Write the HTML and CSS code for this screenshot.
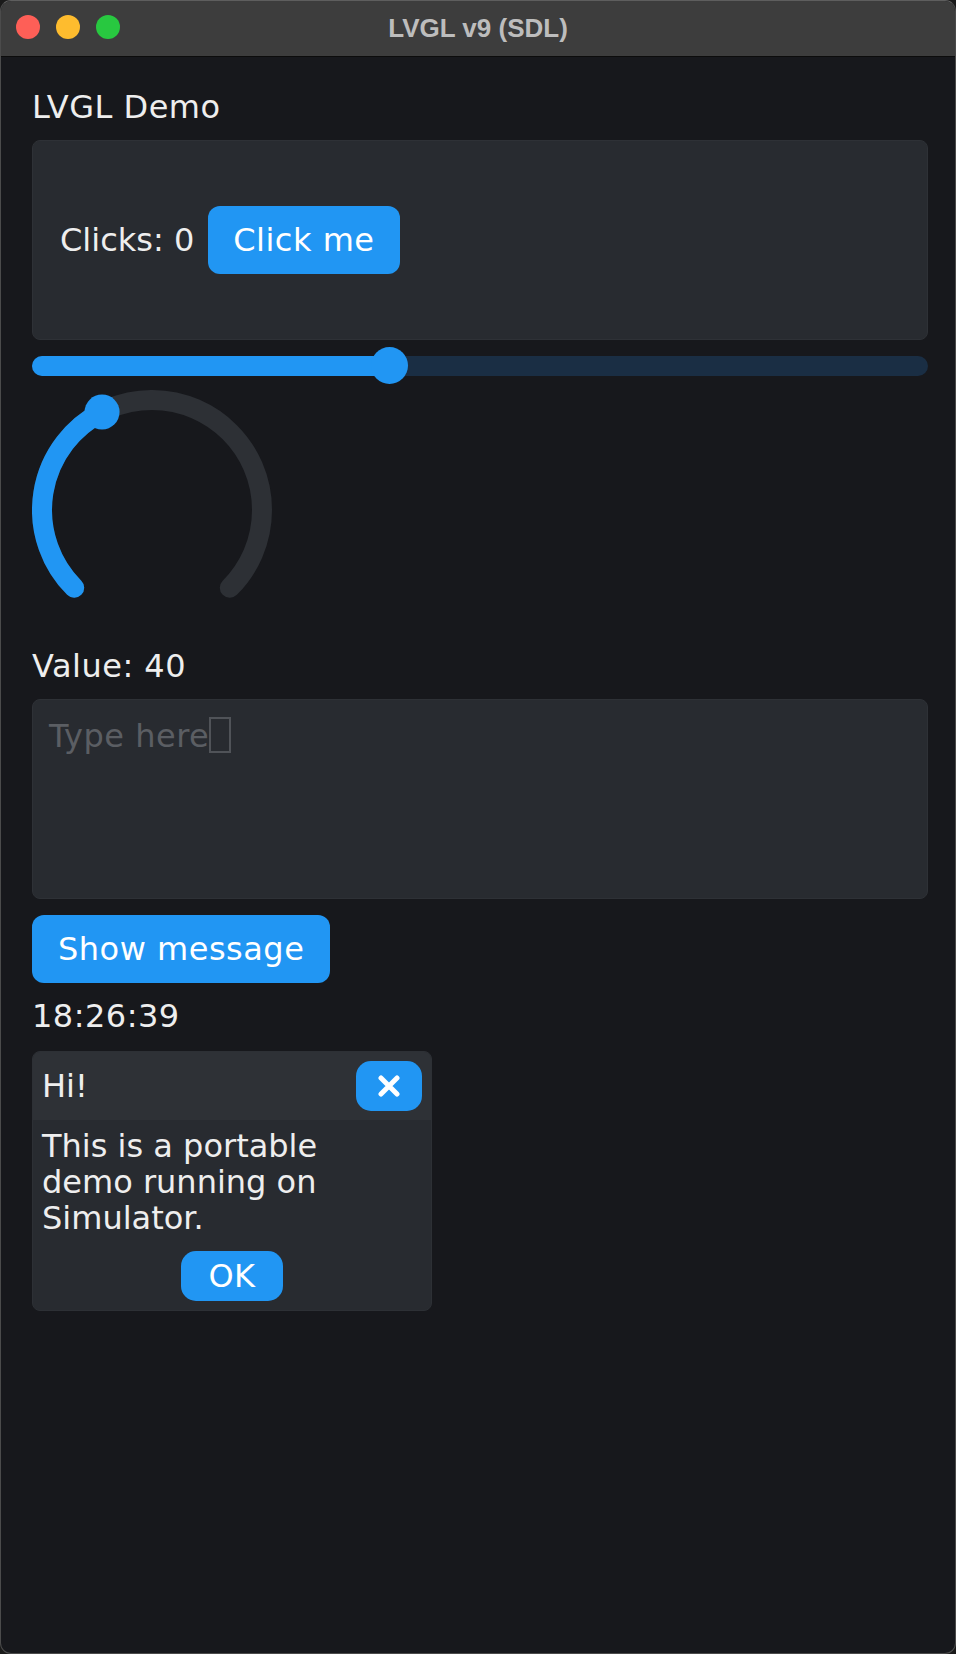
FILE: index.html
```html
<!DOCTYPE html>
<html lang="en">
<head>
<meta charset="utf-8">
<title>LVGL v9 (SDL)</title>
<link rel="stylesheet" href="styles.css">
</head>
<body>
<div class="window">
  <header class="titlebar">
    <div class="lights">
      <span class="light red"></span>
      <span class="light yellow"></span>
      <span class="light green"></span>
    </div>
    <div class="title">LVGL v9 (SDL)</div>
  </header>
  <main class="screen">
    <div class="lbl">LVGL Demo</div>
    <div class="card">
      <span class="lbl clicks">Clicks: 0</span>
      <button class="btn">Click me</button>
    </div>
    <div class="slider">
      <div class="slider-fill" style="width:40%"><span class="slider-knob"></span></div>
    </div>
    <svg class="arc" width="240" height="244" viewBox="0 0 240 244">
      <path d="M 42.22 197.78 A 110 110 0 1 1 197.78 197.78" fill="none" stroke="#2d3035" stroke-width="20" stroke-linecap="round"/>
      <path d="M 42.22 197.78 A 110 110 0 0 1 70.06 22" fill="none" stroke="#2196f3" stroke-width="20" stroke-linecap="round"/>
      <circle cx="70.06" cy="22" r="17.5" fill="#2196f3"/>
    </svg>
    <div class="lbl">Value: 40</div>
    <div class="textarea"><span class="placeholder">Type here</span><span class="cursor"></span></div>
    <button class="btn">Show message</button>
    <div class="lbl time">18:26:39</div>
    <div class="msgbox">
      <div class="msg-header">
        <span class="msg-title">Hi!</span>
        <button class="btn close-btn" aria-label="Close">
          <svg width="22" height="22" viewBox="0 0 22 22"><path d="M3 3 L19 19 M19 3 L3 19" stroke="#ffffff" stroke-width="5" stroke-linecap="round"/></svg>
        </button>
      </div>
      <div class="msg-body">
        <p class="msg-text">This is a portable<br>demo running on<br>Simulator.</p>
        <div class="msg-footer"><button class="btn ok-btn">OK</button></div>
      </div>
    </div>
  </main>
</div>
</body>
</html>
```

FILE: styles.css
```css
html, body {
  margin: 0;
  padding: 0;
  background: #1a1a1a;
}
body {
  width: 956px;
  height: 1654px;
  font-family: "DejaVu Sans", "Liberation Sans", sans-serif;
}
.window {
  box-sizing: border-box;
  width: 956px;
  height: 1654px;
  border: 1px solid #4b4b4b;
  border-top-color: #5e5e5e;
  border-radius: 11px;
  overflow: hidden;
  background: #17181c;
  display: flex;
  flex-direction: column;
}
.titlebar {
  height: 55px;
  flex: none;
  background: #3d3d3d;
  border-bottom: 1px solid #0c0c0c;
  position: relative;
  display: flex;
  align-items: center;
  justify-content: center;
}
.lights {
  position: absolute;
  left: 15px;
  top: 14px;
  display: flex;
  gap: 16px;
}
.light {
  width: 24px;
  height: 24px;
  border-radius: 50%;
}
.red { background: #fe5f57; }
.yellow { background: #febc2e; }
.green { background: #28c840; }
.title {
  font-family: "Liberation Sans", Arial, sans-serif;
  font-weight: bold;
  font-size: 26px;
  color: #bdbdbd;
  margin-top: -1px;
}
.screen {
  flex: 1;
  padding: 33px 27px 0 31px;
  display: flex;
  flex-direction: column;
  align-items: flex-start;
  gap: 16px;
}
.lbl {
  font-size: 32px;
  line-height: 34px;
  color: #eeeeee;
  letter-spacing: 0.5px;
}
.clicks {
  letter-spacing: 0;
}
.time {
  line-height: 36px;
  margin-top: -1px;
}
.card {
  box-sizing: border-box;
  width: 896px;
  height: 200px;
  background: #282b30;
  border: 1px solid #2e3136;
  border-radius: 8px;
  padding: 0 27px;
  display: flex;
  align-items: center;
  gap: 14px;
}
.btn {
  font-family: "DejaVu Sans", "Liberation Sans", sans-serif;
  font-size: 32px;
  line-height: 34px;
  letter-spacing: 0.5px;
  color: #ffffff;
  background: #2196f3;
  border: none;
  border-radius: 12px;
  height: 68px;
  padding: 0 26px;
  margin: 0;
  display: flex;
  align-items: center;
  justify-content: center;
}
.card .btn {
  padding: 0 25px;
}
.slider {
  width: 896px;
  height: 20px;
  border-radius: 10px;
  background: #1a2e44;
  flex: none;
}
.slider-fill {
  position: relative;
  height: 20px;
  border-radius: 10px;
  background: #2196f3;
}
.slider-knob {
  position: absolute;
  right: -18px;
  top: -9px;
  width: 37px;
  height: 37px;
  border-radius: 50%;
  background: #2196f3;
}
.arc {
  display: block;
  flex: none;
  margin-top: -2px;
  margin-bottom: -1px;
}
.textarea {
  box-sizing: border-box;
  width: 896px;
  height: 200px;
  background: #282b30;
  border: 1px solid #2e3136;
  border-radius: 8px;
  padding: 19px 16px;
  font-size: 32px;
  line-height: 34px;
  display: flex;
  align-items: flex-start;
}
.placeholder {
  color: #5b5e63;
  letter-spacing: 0.5px;
}
.cursor {
  box-sizing: border-box;
  width: 22px;
  height: 36px;
  margin-top: -2px;
  border: 2px solid #505358;
}
.msgbox {
  width: 400px;
  margin-top: 1px;
  border-radius: 8px;
  overflow: hidden;
  background: #282b30;
  border: 1px solid #2d3035;
  box-sizing: border-box;
}
.msg-header {
  height: 68px;
  background: #2e3136;
  display: flex;
  align-items: center;
  justify-content: space-between;
  padding: 0 9px 0 9px;
}
.msg-title {
  font-size: 32px;
  line-height: 34px;
  color: #eeeeee;
}
.close-btn {
  width: 66px;
  height: 50px;
  padding: 0;
  border-radius: 15px;
}
.close-btn svg {
  display: block;
}
.msg-body {
  padding: 8px 9px 9px 9px;
}
.msg-text {
  margin: 0;
  font-size: 32px;
  line-height: 36px;
  color: #eeeeee;
}
.msg-footer {
  display: flex;
  justify-content: center;
  margin-top: 15px;
}
.ok-btn {
  width: 102px;
  height: 50px;
  padding: 0;
  border-radius: 15px;
}
```
